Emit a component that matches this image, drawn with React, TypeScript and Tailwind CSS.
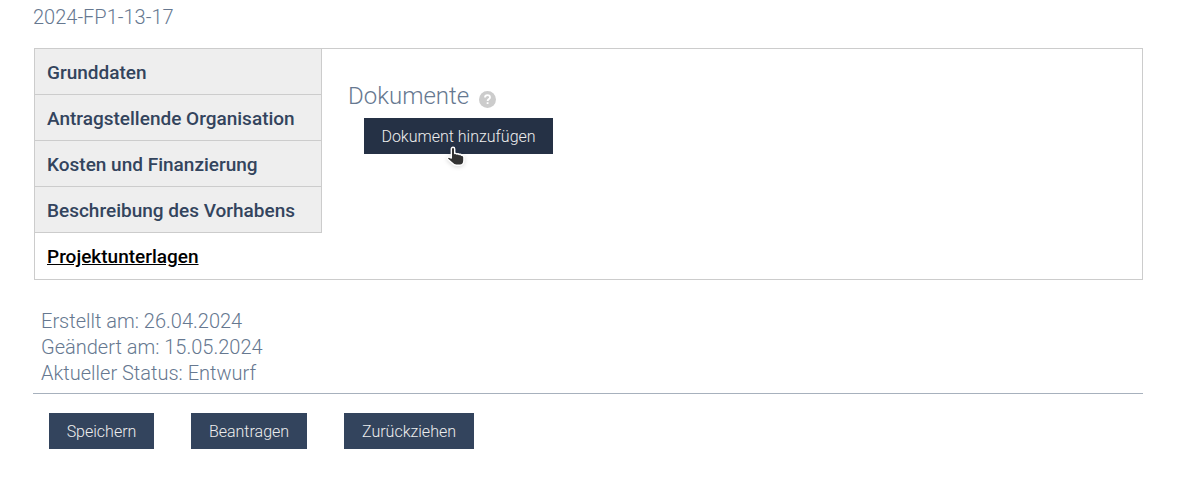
import React from "react";

const tabs = [
  "Grunddaten",
  "Antragstellende Organisation",
  "Kosten und Finanzierung",
  "Beschreibung des Vorhabens",
];

const buttonClass =
  "h-9 bg-[#33445d] pt-0.5 text-center text-base font-light whitespace-nowrap text-[#eeeeee] hover:bg-[#253145]";

function HandCursor() {
  return (
    <svg
      aria-hidden="true"
      className="pointer-events-none absolute top-7 left-[82px] h-[22px] w-5 drop-shadow-sm"
      viewBox="0 0 20 22"
    >
      <path
        d="M7 1.3C8 1.3 8.7 2 8.7 3V7.6C9.5 7.2 10.4 7.4 10.9 8C11.7 7.6 12.7 7.8 13.2 8.5C14 8.2 15 8.5 15.4 9.3C16.8 9.1 17.9 10 17.9 11.3V14.5C17.9 17 16.4 19.3 13.9 19.3H10.4C8.4 19.3 7.1 18.3 6.1 17L1.8 13.3C0.9 12.2 1.9 10.8 3.3 11.2L5.3 12V3C5.3 2 6 1.3 7 1.3Z"
        fill="#333333"
        stroke="#ffffff"
        strokeWidth="1.4"
        strokeLinejoin="round"
      />
    </svg>
  );
}

export default function App() {
  return (
    <main className="bg-white pr-9 pl-[33px] font-['Roboto','Liberation_Sans',sans-serif] text-[#667890]">
      <p className="pt-1 text-xl leading-[26px] font-light">2024-FP1-13-17</p>

      <div className="mt-[18px] ml-px flex border border-[#cccccc]">
        <nav className="w-[287px] shrink-0">
          <ul>
            {tabs.map((tab) => (
              <li key={tab} className="border-r border-b border-[#cccccc] bg-[#eeeeee]">
                <a
                  href="#"
                  className="block h-[45px] pl-3 text-[19px] leading-[48px] font-medium whitespace-nowrap text-[#33445d]"
                >
                  {tab}
                </a>
              </li>
            ))}
            <li>
              <a
                href="#"
                aria-current="page"
                className="block h-[46px] pl-3 text-[19px] leading-[48px] font-medium whitespace-nowrap text-black underline"
              >
                Projektunterlagen
              </a>
            </li>
          </ul>
        </nav>

        <section className="min-w-0 flex-1 pt-8 pl-[26px]">
          <div className="flex items-center gap-[10px]">
            <h2 className="text-2xl leading-[30px] font-light">Dokumente</h2>
            <button
              type="button"
              aria-label="Hilfe"
              className="mt-[7px] flex size-[17px] items-center justify-center rounded-full bg-[#cccccc]"
            >
              <svg aria-hidden="true" className="size-[11px]" viewBox="0 0 11 11" fill="none">
                <path
                  d="M3 3.6C3 2 4 1.2 5.5 1.2S8 2 8 3.4C8 5 5.6 5.1 5.6 7"
                  stroke="white"
                  strokeWidth="1.8"
                />
                <path d="M4.7 8.2H6.5V10H4.7Z" fill="white" />
              </svg>
            </button>
          </div>
          <div className="relative mt-[7px] ml-4 w-fit">
            <button
              type="button"
              className="h-9 w-[189px] bg-[#253145] pt-0.5 text-center text-base font-light whitespace-nowrap text-[#eeeeee]"
            >
              Dokument hinzufügen
            </button>
            <HandCursor />
          </div>
        </section>
      </div>

      <div className="mt-7 pb-[7px] pl-2 text-xl leading-[26px] font-light">
        <p>Erstellt am: 26.04.2024</p>
        <p>Geändert am: 15.05.2024</p>
        <p>Aktueller Status: Entwurf</p>
      </div>
      <hr className="border-t border-[#a7b1bd]" />

      <div className="flex gap-[37px] pt-[19px] pb-[30px] pl-4">
        <button type="button" className={`${buttonClass} w-[105px]`}>
          Speichern
        </button>
        <button type="button" className={`${buttonClass} w-[116px]`}>
          Beantragen
        </button>
        <button type="button" className={`${buttonClass} w-[130px]`}>
          Zurückziehen
        </button>
      </div>
    </main>
  );
}
